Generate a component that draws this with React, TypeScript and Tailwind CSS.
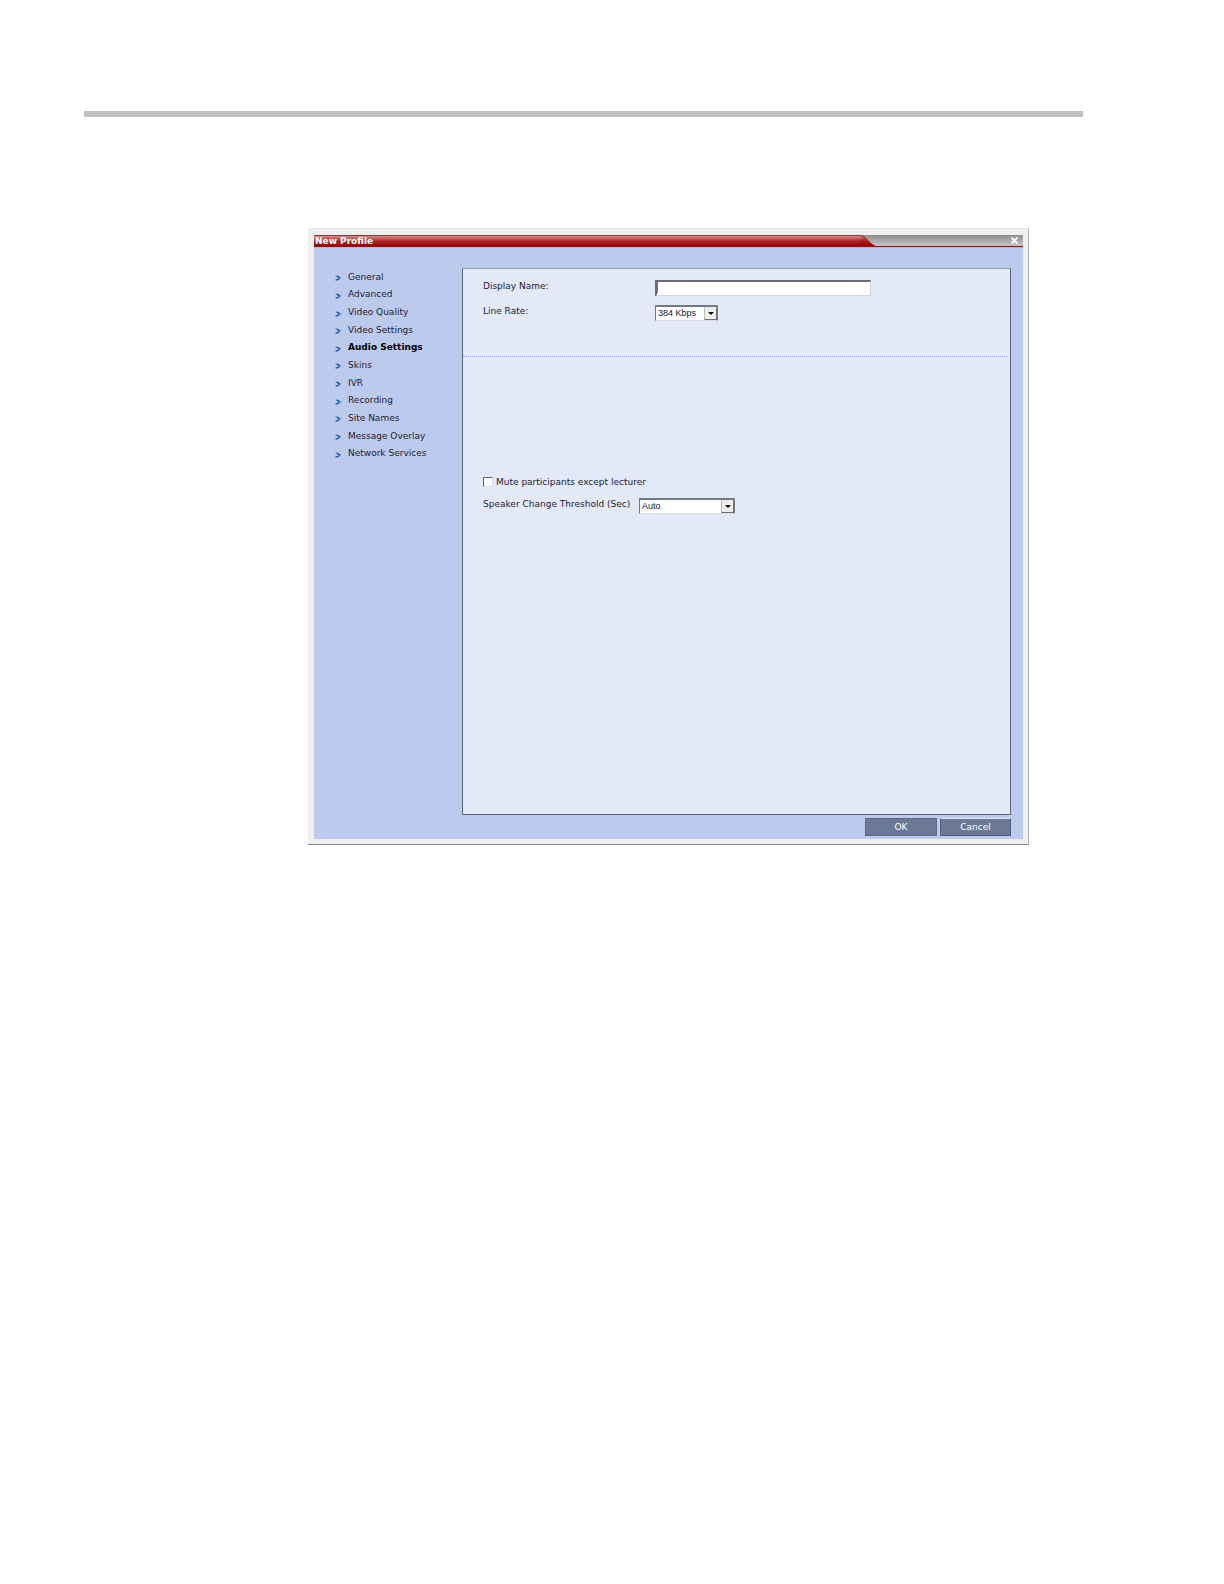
import { useState } from 'react';

const navItems = [
  'General',
  'Advanced',
  'Video Quality',
  'Video Settings',
  'Audio Settings',
  'Skins',
  'IVR',
  'Recording',
  'Site Names',
  'Message Overlay',
  'Network Services',
];

const NavArrow = () => (
  <svg viewBox="0 0 6 6" className="mt-[3px] h-[6px] w-[6px] shrink-0" fill="none" aria-hidden="true">
    <path d="M1.5 0.8 L4.8 2.9 L3.2 4.4 L0.6 5.2" stroke="#1450b4" strokeWidth="1.4" />
    <path d="M0 0.8 H2" stroke="#7fa6e8" strokeWidth="1" />
  </svg>
);

type SelectBoxProps = {
  id: string;
  options: string[];
  className: string;
};

const SelectBox = ({ id, options, className }: SelectBoxProps) => (
  <div className={`relative h-4 border border-t-2 border-[#747880] border-b-[#d8dce8] bg-white ${className}`}>
    <select
      id={id}
      className="block h-full w-full appearance-none bg-transparent pl-[2px] font-['Liberation_Sans',sans-serif] text-[9px] leading-[13px] text-[#15151c] outline-none"
    >
      {options.map((option) => (
        <option key={option}>{option}</option>
      ))}
    </select>
    <span className="pointer-events-none absolute inset-y-0 right-0 flex w-[13px] items-center justify-center border border-r-[#707070] border-b-[#707070] border-t-[#e8e8e8] border-l-[#b8b8b8] bg-[#eeeeec]">
      <svg viewBox="0 0 6 3" className="h-[3px] w-[6px]" aria-hidden="true">
        <path d="M0 0 H6 L3 3 Z" fill="#000" />
      </svg>
    </span>
  </div>
);

const TitleBar = () => (
  <header className="flex h-[13px] border-b border-[#d9a9b4] bg-gradient-to-b from-[#8b8f8b] to-[#cfc9cc]">
    <div className="flex h-full w-full border-b border-[#7c1822]">
      <h1 className="h-[11px] w-[547px] border-t border-[#8a3a3a] bg-gradient-to-b from-[#d08d8d] via-[#ac2424] to-[#930000] pl-px text-[9px] font-bold leading-[11px] text-white">
        New Profile
      </h1>
      <svg viewBox="0 0 14 11" className="h-[11px] w-[14px]" aria-hidden="true">
        <defs>
          <linearGradient id="tab-edge" x1="0" y1="0" x2="0" y2="1">
            <stop offset="0" stopColor="#c98080" />
            <stop offset="0.5" stopColor="#ac2424" />
            <stop offset="1" stopColor="#930000" />
          </linearGradient>
        </defs>
        <path d="M0 0 C5 0.5 8 9 14 11 H0 Z" fill="url(#tab-edge)" />
        <path d="M0 0.5 C5 1 8 9 14 10.5" fill="none" stroke="#a03038" strokeWidth="1" />
      </svg>
      <button type="button" aria-label="Close" className="ml-auto mr-[5px] flex items-center">
        <svg viewBox="0 0 7 7" className="h-[7px] w-[7px]" aria-hidden="true">
          <path d="M0.5 0.5 L6.5 6.5 M6.5 0.5 L0.5 6.5" stroke="#fff" strokeWidth="1.8" />
        </svg>
      </button>
    </div>
  </header>
);

const App = () => {
  const [active, setActive] = useState('Audio Settings');
  const [muted, setMuted] = useState(false);

  return (
    <div className="bg-white font-['DejaVu_Sans',sans-serif] text-[9px] text-[#1c1c30]">
      <hr className="mt-[111px] mr-[141px] ml-[84px] h-[6px] border-0 bg-[#bfbfbf]" />

      <main className="mt-[111px] mr-[195px] ml-[308px] border-t border-r border-b border-t-[#e4e4e4] border-r-[#b4b4b4] border-b-[#858585] bg-[#efeff0] pt-[6px] pr-[5px] pb-[5px] pl-[6px]">
        <TitleBar />

        <div className="flex bg-[#bccaee] pt-5">
          <nav className="w-[148px] shrink-0">
            <ul className="grid h-[194px] auto-rows-fr">
              {navItems.map((item) => (
                <li key={item} className="flex items-center">
                  <a
                    href="#"
                    onClick={(e) => {
                      e.preventDefault();
                      setActive(item);
                    }}
                    className={`flex items-center gap-[7px] pl-[21px] leading-[12px] ${
                      item === active ? 'font-bold text-black' : ''
                    }`}
                  >
                    <NavArrow />
                    {item}
                  </a>
                </li>
              ))}
            </ul>
          </nav>

          <div className="mr-3 flex-1">
            <form className="h-[547px] border border-[#5f6474] border-t-[#9a9ea8] bg-[#e3e9f9]">
              <div className="mr-[3px] h-[88px] border-b border-dotted border-[#a0a4b8] pt-[11px] pl-5">
                <div className="flex h-[25px] items-start">
                  <label htmlFor="display-name" className="w-[172px] leading-[12px]">
                    Display Name:
                  </label>
                  <div className="flex h-4 w-[216px] items-start border border-t-2 border-l-2 border-[#d0d4e0] border-t-[#686c74] border-l-[#686c74] bg-white">
                    {/* text cursor */}
                    <span className="h-[11px] w-px bg-[#70747c]" />
                    <input
                      id="display-name"
                      type="text"
                      className="h-full min-w-0 flex-1 bg-transparent px-px caret-transparent outline-none"
                    />
                  </div>
                </div>
                <div className="flex h-[25px] items-start">
                  <label htmlFor="line-rate" className="w-[172px] leading-[12px]">
                    Line Rate:
                  </label>
                  <SelectBox id="line-rate" options={['384 Kbps', '512 Kbps', '768 Kbps']} className="w-[63px]" />
                </div>
              </div>

              <div className="pt-[119px] pl-5">
                <div className="flex h-[22px] items-start gap-[3px]">
                  <input
                    id="mute"
                    type="checkbox"
                    checked={muted}
                    onChange={(e) => setMuted(e.target.checked)}
                    className="mt-px h-[10px] w-[10px] appearance-none border border-[#d8dce8] border-t-[#60646c] border-l-[#60646c] bg-white checked:bg-[#1450b4]"
                  />
                  <label htmlFor="mute" className="leading-[12px]">
                    Mute participants except lecturer
                  </label>
                </div>
                <div className="flex items-start">
                  <label htmlFor="threshold" className="w-[156px] leading-[12px]">
                    Speaker Change Threshold (Sec)
                  </label>
                  <SelectBox id="threshold" options={['Auto', '1', '2', '3']} className="w-24" />
                </div>
              </div>
            </form>

            <footer className="flex h-[24px] justify-end gap-[3px] pt-[3px]">
              <button type="button" className="h-[18px] w-[72px] border border-[#5d687e] bg-[#6b7896] pt-px text-white">
                OK
              </button>
              <button
                type="button"
                className="h-[18px] w-[71px] border border-[#4f5c80] border-t-[#dfe6f8] bg-[#6b7896] pt-px text-white"
              >
                Cancel
              </button>
            </footer>
          </div>
        </div>
      </main>
    </div>
  );
};

export default App;
